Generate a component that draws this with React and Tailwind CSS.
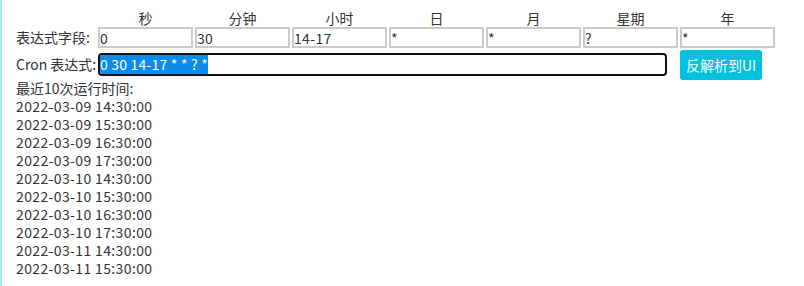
import React from "react";

const headers = ["秒", "分钟", "小时", "日", "月", "星期", "年"];
const values = ["0", "30", "14-17", "*", "*", "?", "*"];
const times = [
  "2022-03-09 14:30:00",
  "2022-03-09 15:30:00",
  "2022-03-09 16:30:00",
  "2022-03-09 17:30:00",
  "2022-03-10 14:30:00",
  "2022-03-10 15:30:00",
  "2022-03-10 16:30:00",
  "2022-03-10 17:30:00",
  "2022-03-11 14:30:00",
  "2022-03-11 15:30:00",
];

export default function App() {
  return (
    <div
      className="w-[804px] h-[286px] bg-white border-l-2 border-[#a6e9f2] pl-[14px] pt-[9px] text-[14px] text-[#333] overflow-hidden"
      style={{ fontFamily: '"Noto Sans CJK SC", "Noto Sans", sans-serif' }}
    >
      <div className="flex h-[18px] items-center leading-[18px]">
        <div className="w-[82px] shrink-0" />
        <div className="flex gap-[2px]">
          {headers.map((h) => (
            <div key={h} className="w-[95px] text-center">
              {h}
            </div>
          ))}
        </div>
      </div>
      <div className="flex items-center h-[21px]">
        <div className="w-[82px] shrink-0 leading-[21px]">表达式字段:</div>
        <div className="flex gap-[2px]">
          {values.map((v, i) => (
            <input
              key={i}
              readOnly
              value={v}
              className="w-[95px] h-[21px] border-2 border-[#cbcbcb] px-0 text-[14px] leading-[17px] tracking-[0.35px] text-[#333] outline-none"
              style={{ fontFamily: '"Noto Sans CJK SC", "Noto Sans", sans-serif' }}
            />
          ))}
        </div>
      </div>
      <div className="flex items-center h-[31px] mt-[1px]">
        <div className="w-[82px] shrink-0 leading-[23px] whitespace-nowrap">Cron 表达式:</div>
        <div className="w-[569px] h-[23px] border-2 border-[#111] rounded-[4px] flex items-center overflow-hidden">
          <span className="bg-[#0a8cec] text-white leading-[19px] h-[19px] tracking-[0.2px]">0 30 14-17 * * ? *</span>
        </div>
        <button className="ml-[13px] w-[82px] h-[30px] rounded-[3px] bg-[#00c1de] text-white text-[14px] leading-[30px]">
          反解析到UI
        </button>
      </div>
      <div className="leading-[18px] mt-[-1px]">
        <div>最近10次运行时间:</div>
        {times.map((t) => (
          <div key={t} className="tracking-[0.37px]">
            {t}
          </div>
        ))}
      </div>
    </div>
  );
}
